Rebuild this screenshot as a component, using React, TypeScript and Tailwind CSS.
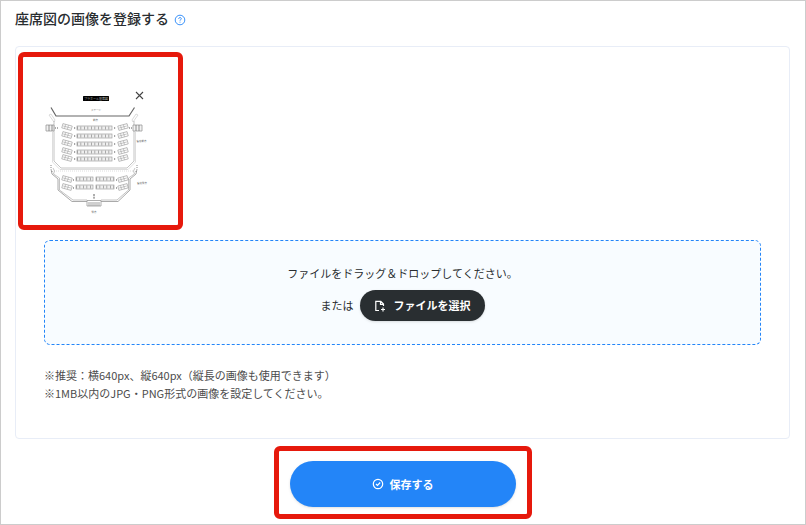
import type { ReactNode } from 'react';

const rowsFront = [128, 136, 144, 152, 159];
const rowsBack = [180, 188];

function Highlight({ className, children }: { className: string; children: ReactNode }) {
  return <div className={`rounded-md border-5 border-[#e6190c] ${className}`}>{children}</div>;
}

function SideSeats({ x, y, angle }: { x: number; y: number; angle: number }) {
  return (
    <g transform={`translate(${x} ${y}) rotate(${angle})`} stroke="#999" strokeWidth=".6" fill="none">
      <rect x="-4.8" y="-2.2" width="9.6" height="4.4" />
      <path d="M-2 -2V2M1 -2V2M-4 0H4" strokeWidth=".5" />
    </g>
  );
}

function Block({ x, y, w }: { x: number; y: number; w: number }) {
  return (
    <g>
      <rect x={x} y={y - 2} width={w} height="4" fill="#eee" stroke="#a0a0a0" strokeWidth=".7" />
      <path d={`M${x} ${y}h${w}`} stroke="#8c8c8c" strokeWidth="3" strokeDasharray=".7 2.8" />
    </g>
  );
}

function SeatMap() {
  return (
    <svg viewBox="40 90 110 126" className="h-[126px] w-[110px]" role="img" aria-label="座席図" fill="none" fontFamily="Noto Sans CJK JP, sans-serif">
      <rect x="83" y="96" width="26" height="5" rx=".5" fill="#000" />
      <text x="96" y="99.8" fontSize="3" textAnchor="middle" fill="#bbb">プラホール座席図</text>
      <text x="96" y="111.3" fontSize="2.5" textAnchor="middle" fill="#888">ステージ</text>
      <text x="95.5" y="121" fontSize="2.5" textAnchor="middle" fill="#555">前方</text>
      <path d="M51 107.5L56 116H129L134.5 107.5" stroke="#666" strokeWidth="1.2" />
      <path d="M49 115l2-1 4 6-1 2zM138 115l-2-1-4 6 1 2z" stroke="#ccc" strokeWidth=".7" />
      <g stroke="#b5b5b5" strokeWidth=".8">
        <path d="M54 121V161L61 168H127L134 161V121" />
        <path d="M52.5 132V162L60 169.5H128L135.5 162V132" stroke="#d5d5d5" />
        <path d="M54 171H134" strokeDasharray="1 1" stroke="#d5d5d5" />
        <path d="M53 168l1.5 3-1 3 6 4V190L73 200H87M135 168l-1.5 3 1 3-6 4V190L117 200H101" />
        <path d="M51 169l1 5 6 5V190L72 201.5H87M137 169l-1 5-6 5V190L118 201.5H101" stroke="#aaa" strokeWidth="1" />
      </g>
      <path d="M51 165v3M52 171v2M137 165v3M136 171v2" stroke="#888" strokeWidth="1" strokeDasharray="1 1" />
      <g stroke="#999" strokeWidth=".8">
        <path d="M46 125H54V131H46zM133 125H142V131H133z" fill="#f2f2f2" />
        <path d="M49 125V131M52 125V131M136 125V131M139 125V131" stroke="#777" />
        <path d="M55 128h4M129 128h4" strokeDasharray="1 1" stroke="#333" />
        <path d="M87 200.5H101V206H87z" />
        <path d="M88 203H100M88 205H100" stroke="#888" />
        <path d="M94 194V199" stroke="#333" strokeDasharray="2 .7" />
      </g>
      {rowsFront.map((y) => (
        <g key={y}>
          <SideSeats x={67} y={y - 1} angle={15} />
          <SideSeats x={123} y={y - 1} angle={-15} />
          <Block x={77} y={y} w={35} />
          <path d={`M74 ${y}h1.2M114 ${y}h1.2`} stroke="#888" strokeWidth="1.5" />
        </g>
      ))}
      {rowsBack.map((y) => (
        <g key={y}>
          <SideSeats x={67} y={y - 1} angle={15} />
          <SideSeats x={123} y={y - 1} angle={-15} />
          <Block x={76} y={y - 1} w={17} />
          <Block x={96} y={y - 1} w={18} />
          <path d={`M73 ${y}h1M116 ${y}h1`} stroke="#888" strokeWidth="1.5" />
        </g>
      ))}
      <g fontSize="2.5" textAnchor="middle" fill="#555">
        <text x="141.5" y="141.5">客席前方</text>
        <text x="142" y="184">客席後方</text>
        <text x="94" y="212.5">後方</text>
      </g>
    </svg>
  );
}

export default function App() {
  return (
    <main className="min-h-screen border border-[#ccc] bg-white pt-[7px] pr-[15px] pl-3.5 font-['Noto_Sans_CJK_JP',sans-serif] text-[11px] text-[#292d30]">
      <header className="flex items-center gap-[5px]">
        <h1 className="text-[14px] leading-5 font-medium">座席図の画像を登録する</h1>
        <button type="button" aria-label="ヘルプ" className="pt-1 text-[#2385f8]">
          <svg viewBox="0 0 12 12" className="size-3" fill="none" stroke="currentColor" strokeWidth=".9">
            <circle cx="6" cy="6" r="4.8" />
            <path d="M4.7 4.9c0-1.8 2.6-1.8 2.6-.2 0 1-1.3 1-1.3 2M6 7.7v.9" />
          </svg>
        </button>
      </header>

      <section className="mt-[18px] rounded-sm border border-[#e8edf7] pt-[5px] pb-9">
        <Highlight className="ml-0.5 h-[178px] w-[165px] pt-[33px] pl-[17px]">
          <div className="relative w-[110px]">
            <SeatMap />
            <button type="button" aria-label="画像を削除" className="absolute top-px right-1.5">
              <svg viewBox="0 0 9 9" className="size-[9px]" stroke="#444" strokeWidth="1.1">
                <path d="M1 1l7 7M8 1L1 8" />
              </svg>
            </button>
          </div>
        </Highlight>

        <div className="mx-7 mt-2.5 flex flex-col items-center rounded-md border border-dashed border-[#2385f8] bg-[#f8fcff] py-[23px]">
          <p className="leading-[18px]">ファイルをドラッグ＆ドロップしてください。</p>
          <div className="mt-2 flex items-center gap-1.5">
            <span>または</span>
            <button type="button" className="flex h-[31px] items-center gap-2 rounded-full bg-[#292e31] px-3.5 font-bold text-white shadow-sm">
              <svg viewBox="0 0 12 12" className="size-3" fill="none" stroke="currentColor" strokeWidth="1.2">
                <path d="M5 10.5H1.8V1.3H6.8L9.5 4V6M6.5 1.5V4.3H9.5M9 7.5V11.5M7 9.5H11" />
              </svg>
              ファイルを選択
            </button>
          </div>
        </div>

        <div className="mx-7 mt-[21px] leading-[18px] text-[#4c4c4c]">
          <p>※推奨：横640px、縦640px（縦長の画像も使用できます）</p>
          <p>※1MB以内のJPG・PNG形式の画像を設定してください。</p>
        </div>
      </section>

      <Highlight className="mx-auto mt-[7px] w-[258px] px-[11px] pt-2.5 pb-[7px]">
        <button type="button" className="flex h-[46px] w-full items-center justify-center gap-1.5 rounded-full bg-[#2385f8] font-bold text-white shadow-sm">
          <svg viewBox="0 0 12 12" className="size-3" fill="none" stroke="currentColor" strokeWidth="1.2">
            <circle cx="6" cy="6" r="4.7" />
            <path d="M4 6l1.5 1.5L8.2 4.5" />
          </svg>
          保存する
        </button>
      </Highlight>
    </main>
  );
}
